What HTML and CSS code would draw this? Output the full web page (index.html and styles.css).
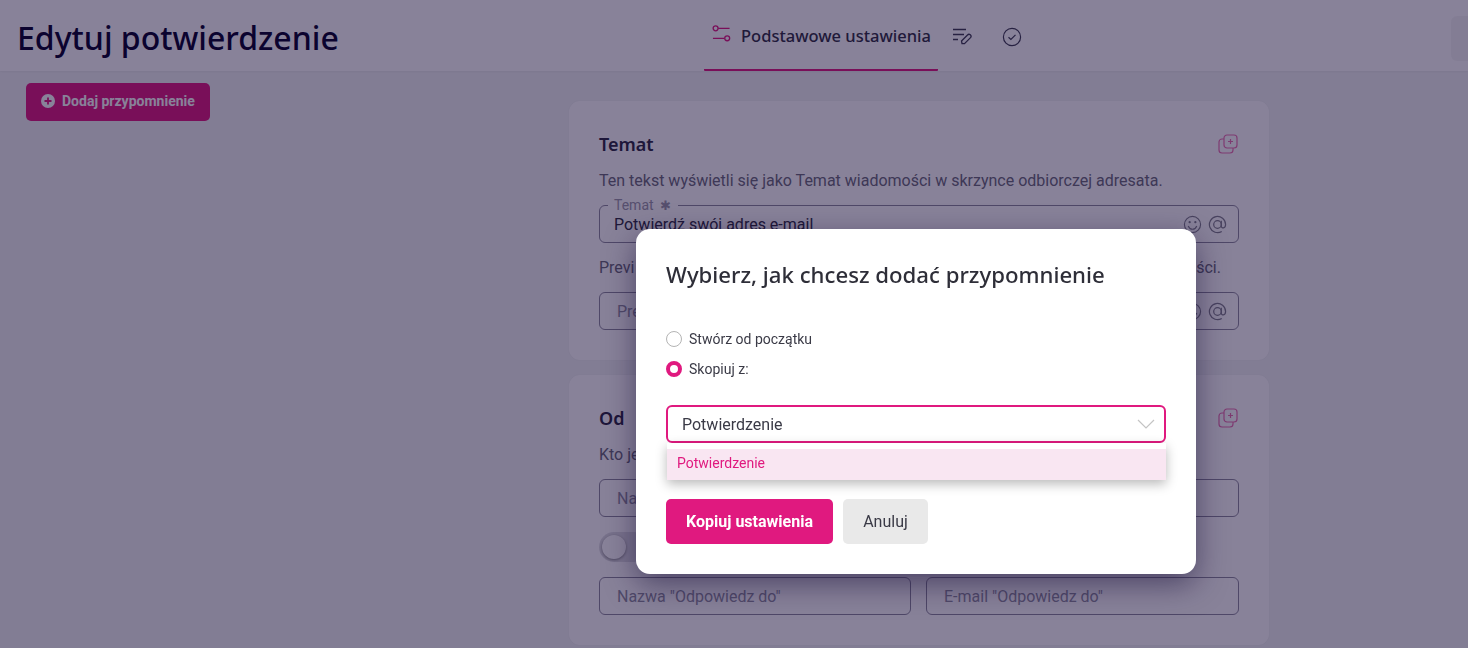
FILE: index.html
```html
<!DOCTYPE html>
<html lang="pl">
<head>
<meta charset="utf-8">
<title>Edytuj potwierdzenie</title>
<link rel="stylesheet" href="styles.css">
</head>
<body>
<header class="topbar">
  <h1 class="page-title">Edytuj potwierdzenie</h1>
  <nav class="tabs">
    <a class="tab tab-active">
      <svg class="tab-icon" viewBox="0 0 20 20" fill="none" stroke="#e0197f" stroke-width="1.4"><circle cx="3.800" cy="3.500" r="2.600"/><path d="M6.500 3.500H18.500M1 14H13"/><circle cx="16" cy="14" r="2.600"/></svg>
      <span>Podstawowe ustawienia</span>
    </a>
    <a class="tab tab-icon-only">
      <svg class="tab-icon" viewBox="0 0 20 20" fill="none" stroke="#3c3c50" stroke-width="1.300"><path d="M1 2.500H14M1 7.500H12M1 12.500H6"/><path d="M10 16.500l-.5-2.500 6-6a1.900 1.900 0 0 1 3 2.600l-6 6z"/></svg>
    </a>
    <a class="tab tab-icon-only">
      <svg class="tab-icon" viewBox="0 0 20 20" fill="none" stroke="#3c3c50" stroke-width="1.200"><circle cx="10" cy="10" r="8.600"/><path d="M6.500 10.300l2.400 2.200 4.600-4.600"/></svg>
    </a>
  </nav>
  <div class="top-action"></div>
</header>

<main class="content">
  <aside class="side">
    <button class="add-btn">
      <svg class="add-icon" viewBox="0 0 14 14"><circle cx="7" cy="7" r="7" fill="#fff"/><path d="M7 3.500v7M3.500 7h7" stroke="#e0197f" stroke-width="1.800"/></svg>
      Dodaj przypomnienie
    </button>
  </aside>
  <div class="cards">
    <section class="card card-subject">
      <div class="card-head">
        <h2 class="card-title">Temat</h2>
        <svg class="copy-icon" viewBox="0 0 20 20" fill="none" stroke="#e0197f" stroke-width="1.200"><rect x="6" y="1" width="13" height="13" rx="3"/><path d="M6 5H4a3 3 0 0 0-3 3v8a3 3 0 0 0 3 3h8a3 3 0 0 0 3-3v-2"/><path d="M12.500 5v5M10 7.500h5"/></svg>
      </div>
      <p class="card-desc">Ten tekst wyświetli się jako Temat wiadomości w skrzynce odbiorczej adresata.</p>
      <div class="field field-filled">
        <span class="legend">Temat <span class="star">✱</span></span>
        <span class="value">Potwierdź swój adres e-mail</span>
        <span class="field-icons">
          <svg class="field-icon" viewBox="0 0 20 20" fill="none" stroke="#2e2e40" stroke-width="1.200"><circle cx="10" cy="10" r="8.500"/><path d="M5.500 11.500c1 2.500 3 3.500 4.500 3.500s3.500-1 4.500-3.500"/><circle cx="7" cy="7.500" r=".6"/><circle cx="13" cy="7.500" r=".6"/></svg>
          <svg class="field-icon" viewBox="0 0 20 20" fill="none" stroke="#2e2e40" stroke-width="1.300"><circle cx="10" cy="10" r="4"/><path d="M14 6v5.500c0 3 4.500 3 4.500-1.500a8.500 8.500 0 1 0-4 7.300"/></svg>
        </span>
      </div>
      <p class="card-desc desc-second">Previ<span class="desc-hidden"></span>ści.</p>
      <div class="field">
        <span class="placeholder">Preheader</span>
        <span class="field-icons">
          <svg class="field-icon" viewBox="0 0 20 20" fill="none" stroke="#2e2e40" stroke-width="1.200"><circle cx="10" cy="10" r="8.500"/><path d="M5.500 11.500c1 2.500 3 3.500 4.500 3.500s3.500-1 4.500-3.500"/></svg>
          <svg class="field-icon" viewBox="0 0 20 20" fill="none" stroke="#2e2e40" stroke-width="1.300"><circle cx="10" cy="10" r="4"/><path d="M14 6v5.500c0 3 4.500 3 4.500-1.500a8.500 8.500 0 1 0-4 7.300"/></svg>
        </span>
      </div>
    </section>

    <section class="card card-from">
      <div class="card-head">
        <h2 class="card-title">Od</h2>
        <svg class="copy-icon" viewBox="0 0 20 20" fill="none" stroke="#e0197f" stroke-width="1.200"><rect x="6" y="1" width="13" height="13" rx="3"/><path d="M6 5H4a3 3 0 0 0-3 3v8a3 3 0 0 0 3 3h8a3 3 0 0 0 3-3v-2"/><path d="M12.500 5v5M10 7.500h5"/></svg>
      </div>
      <p class="card-desc">Kto jest nadawcą tej wiadomości.</p>
      <div class="field-row">
        <div class="field"><span class="placeholder">Nazwa nadawcy</span></div>
        <div class="field"><span class="placeholder">E-mail nadawcy</span></div>
      </div>
      <div class="toggle-row">
        <span class="toggle"><span class="toggle-knob"></span></span>
      </div>
      <div class="field-row">
        <div class="field"><span class="placeholder">Nazwa "Odpowiedz do"</span></div>
        <div class="field"><span class="placeholder">E-mail "Odpowiedz do"</span></div>
      </div>
    </section>
  </div>
</main>

<div class="backdrop"></div>
<div class="modal" role="dialog">
  <h2 class="modal-title">Wybierz, jak chcesz dodać przypomnienie</h2>
  <div class="radios">
    <label class="radio"><span class="radio-dot"></span>Stwórz od początku</label>
    <label class="radio"><span class="radio-dot radio-on"></span>Skopiuj z:</label>
  </div>
  <div class="select-wrap">
    <div class="select">
      <span>Potwierdzenie</span>
      <svg class="chevron" viewBox="0 0 18 10" fill="none" stroke="#c4c4c4" stroke-width="1.200"><path d="M1 1l8 8 8-8"/></svg>
    </div>
    <div class="dropdown">
      <div class="option">Potwierdzenie</div>
    </div>
  </div>
  <div class="modal-actions">
    <button class="btn btn-primary">Kopiuj ustawienia</button>
    <button class="btn btn-ghost">Anuluj</button>
  </div>
</div>
</body>
</html>
```

FILE: styles.css
```css
* { box-sizing: border-box; }
html, body { height: 100%; }
body {
  margin: 0;
  background: #f3f5f5;
  font-family: Roboto, "Liberation Sans", sans-serif;
  color: #2e2e40;
  overflow: hidden;
}
.topbar {
  height: 71px;
  background: #fff;
  box-shadow: 0 1px 2px rgba(0,0,0,.05);
  display: flex;
  align-items: flex-start;
  position: relative;
  overflow: hidden;
}
.page-title {
  margin: 14px 0 0 17px;
  width: 687px;
  flex-shrink: 0;
  font-family: "Noto Sans", sans-serif;
  font-weight: 500;
  font-size: 32px;
  line-height: 48px;
  color: #05002a;
}
.tabs { display: flex; height: 71px; flex-shrink: 0; }
.tab {
  display: flex;
  align-items: center;
  height: 71px;
}
.tab-active {
  width: 234px;
  padding: 2px 7px 0 8px;
  gap: 10px;
  border-bottom: 2px solid #e0197f;
  border-radius: 0 0 1px 1px;
  font-family: "Noto Sans", sans-serif;
  font-weight: 500;
  font-size: 16.500px;
  color: #2e2e40;
  white-space: nowrap;
}
.tab-icon { width: 19px; height: 19px; flex-shrink: 0; margin-bottom: 3px; }
.tab-icon-only { padding: 2px 0 0; }
.tab-active + .tab-icon-only { margin-left: 14px; }
.tab-icon-only + .tab-icon-only { margin-left: 30px; }
.tab-icon-only .tab-icon { width: 20px; height: 20px; margin-bottom: 0; }
.top-action {
  position: absolute;
  top: 16px;
  left: 1451px;
  width: 60px;
  height: 45px;
  border-radius: 6px;
  background: #e9e9e9;
  opacity: .45;
}
.content {
  display: grid;
  grid-template-columns: 569px 700px;
  align-items: start;
}
.side { padding: 12px 0 0 26px; }
.add-btn {
  height: 38px;
  width: 184px;
  display: flex;
  align-items: center;
  gap: 7px;
  padding: 0 0 2px 15px;
  border: 0;
  border-radius: 5px;
  background: #e0197f;
  color: #fff;
  font-family: Roboto, sans-serif;
  font-weight: 700;
  font-size: 14px;
}
.add-icon { width: 14px; height: 14px; flex-shrink: 0; }
.cards {
  padding-top: 30px;
  display: flex;
  flex-direction: column;
  gap: 15px;
}
.card {
  background: #fff;
  border-radius: 11px;
  padding: 29px 30px 0;
  box-shadow: 0 0 2px rgba(0,0,0,.06);
}
.card-subject { height: 259px; }
.card-from { height: 270px; padding-top: 30px; }
.card-head {
  display: flex;
  justify-content: space-between;
  align-items: center;
  height: 28px;
}
.card-from .card-head { height: 26px; }
.card-title {
  margin: 0;
  font-family: "Noto Sans", sans-serif;
  font-weight: 600;
  font-size: 18px;
  line-height: 28px;
  color: #2a2840;
}
.copy-icon { width: 20px; height: 20px; opacity: .62; margin-right: 1px; }
.card-desc {
  margin: 11px 0 0;
  font-size: 16px;
  line-height: 24px;
  color: #6a6a78;
  white-space: nowrap;
}
.desc-second {
  margin-top: 13px;
  display: flex;
  justify-content: space-between;
  padding-right: 18px;
}
.card-from .card-desc { margin-top: 12px; }
.field {
  position: relative;
  height: 38px;
  margin-top: 12px;
  border: 1px solid #8c8a9c;
  border-radius: 6px;
  display: flex;
  align-items: center;
  padding: 0 11px 0 17px;
  font-size: 16px;
}
.legend {
  position: absolute;
  top: -9px;
  left: 8px;
  padding: 0 7px 0 6px;
  background: #fff;
  font-size: 14px;
  line-height: 16px;
  color: #9a98a8;
}
.star { font-size: 13px; margin-left: 3px; }
.value { color: #2e2e40; margin-left: -3px; }
.placeholder { color: #8e8e9e; }
.field-icons {
  margin-left: auto;
  display: flex;
  gap: 6px;
}
.field-icon { width: 19px; height: 19px; opacity: .6; }
.field-row {
  display: grid;
  grid-template-columns: 312px 313px;
  gap: 15px;
}
.toggle-row {
  display: flex;
  align-items: center;
  height: 60px;
  gap: 12px;
}
.toggle-row + .field-row .field { margin-top: 0; }
.toggle {
  width: 50px;
  height: 30px;
  border-radius: 15px;
  background: #e0e0e4;
  padding: 3px;
  display: block;
}
.toggle-knob {
  display: block;
  width: 24px;
  height: 24px;
  border-radius: 50%;
  background: #fff;
  box-shadow: 0 1px 3px rgba(0,0,0,.4);
}
.backdrop {
  position: fixed;
  inset: 0;
  background: rgba(17,5,51,.5);
}
.modal {
  position: fixed;
  left: 636px;
  top: 229px;
  width: 560px;
  height: 345px;
  background: #fff;
  border-radius: 14px;
  padding: 30px;
  box-shadow: 0 10px 30px rgba(17,5,51,.5);
}
.modal-title {
  margin: 0;
  font-family: "Noto Sans", sans-serif;
  font-weight: 500;
  font-size: 22.200px;
  line-height: 32px;
  color: #2e2e38;
  white-space: nowrap;
}
.radios {
  margin-top: 40px;
  display: flex;
  flex-direction: column;
  gap: 14px;
}
.radio {
  display: flex;
  align-items: center;
  gap: 7px;
  height: 16px;
  font-size: 14px;
  color: #3a3a46;
}
.radio-dot {
  width: 16px;
  height: 16px;
  border: 1px solid #b4b4b4;
  border-radius: 50%;
  background: #fff;
  flex-shrink: 0;
}
.radio-on { border: 4px solid #e0197f; }
.select-wrap { margin-top: 28px; width: 500px; position: relative; }
.select {
  height: 38px;
  border: 2px solid #e0197f;
  border-radius: 6px;
  display: flex;
  align-items: center;
  justify-content: space-between;
  padding: 0 9px 0 14px;
  font-size: 16px;
  color: #3a3a46;
}
.chevron { width: 18px; height: 10px; }
.dropdown {
  margin-left: 1px;
  padding-top: 6px;
  height: 37px;
  background: #fff;
  box-shadow: 0 4px 12px rgba(0,0,0,.28);
}
.option {
  height: 31px;
  line-height: 29px;
  padding-left: 10px;
  background: #f9e6f2;
  color: #e0197f;
  font-size: 14px;
}
.modal-actions {
  margin-top: 19px;
  display: flex;
  gap: 10px;
}
.btn {
  height: 45px;
  border: 0;
  border-radius: 5px;
  font-family: Roboto, sans-serif;
  font-size: 16px;
}
.btn-primary {
  width: 167px;
  background: #e0197f;
  color: #fff;
  font-weight: 700;
}
.btn-ghost {
  width: 85px;
  background: #e9e9e9;
  color: #3a3a46;
}
```
